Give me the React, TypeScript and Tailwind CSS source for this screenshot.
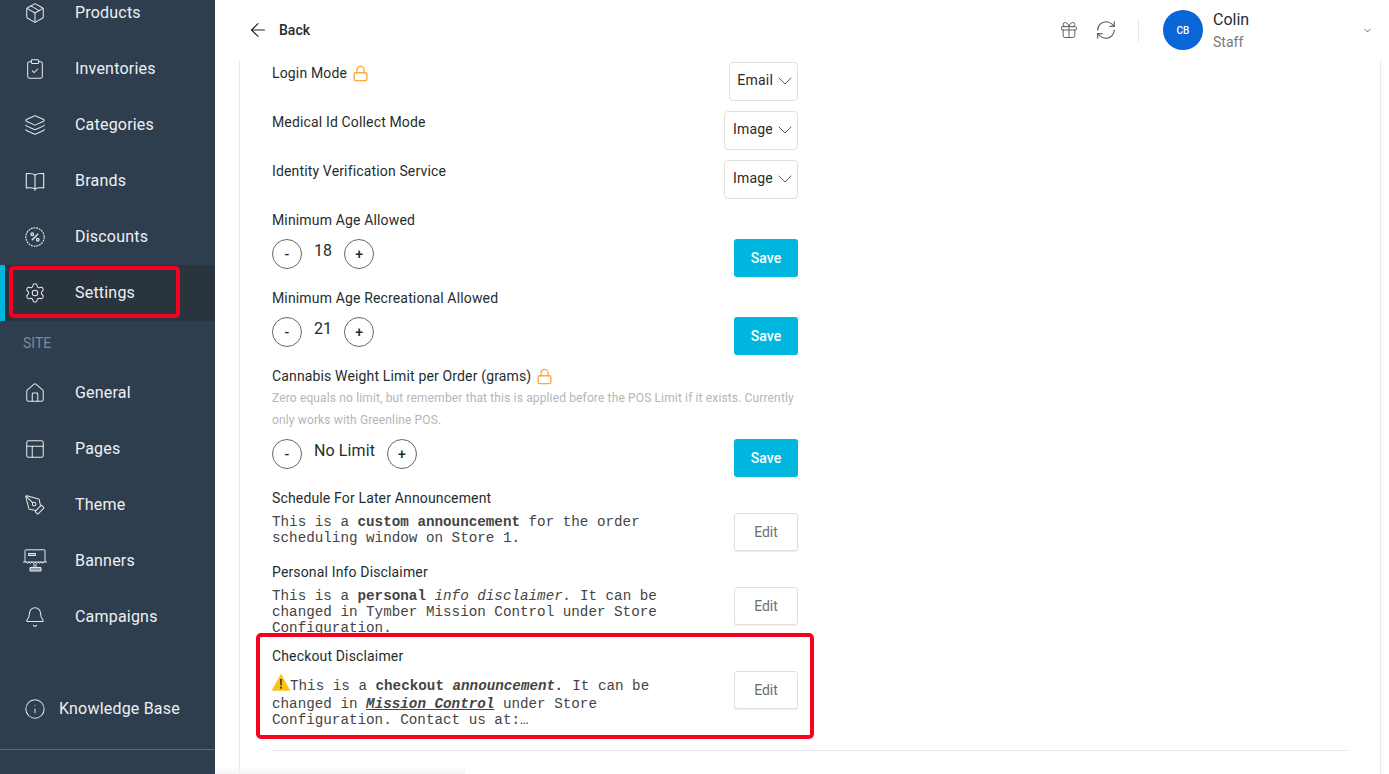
import {
  ArrowLeft,
  Bell,
  ChevronDown,
  ClipboardCheck,
  Gift,
  House,
  Info,
  Layers,
  Lock,
  Package,
  PanelsTopLeft,
  PenTool,
  RefreshCw,
  Settings,
} from 'lucide-react'
import type { ReactNode } from 'react'

const iconProps = { size: 22, strokeWidth: 1.1 }

function DiscountIcon() {
  return (
    <svg width="22" height="22" viewBox="0 0 24 24" fill="none" stroke="currentColor" strokeWidth="1.2">
      <circle cx="12" cy="12" r="10" strokeDasharray="2.2 0.8" />
      <path d="M8.5 15.5l7-7" strokeWidth="1.5" />
      <circle cx="9" cy="9" r="1.4" strokeWidth="1.4" />
      <circle cx="15" cy="15" r="1.4" strokeWidth="1.4" />
    </svg>
  )
}

function BookIcon() {
  return (
    <svg width="22" height="22" viewBox="0 0 24 24" fill="none" stroke="currentColor" strokeWidth="1.2">
      <path d="M12 5.5C10 4 6 3.5 2.5 4v15.5c3.5-.4 7.5 0 9.5 1 2-1 6-1.4 9.500-1V4C18 3.500 14 4 12 5.500z" />
      <path d="M12 5.500V22.500" />
    </svg>
  )
}

function BannerIcon() {
  return (
    <svg width="24" height="24" viewBox="0 0 24 24" fill="none" stroke="currentColor" strokeWidth="1" className="-ml-[1px]">
      <path d="M2 13V1.500Q2 .8 2.800 .8h18.400q.8 0 .8 .7V13" />
      <path d="M0 13h24" />
      <path d="M3 13l1.500 1.500L6 13l1.500 1.500L9 13l1.500 1.500L12 13l1.500 1.500L15 13l1.500 1.500L18 13l1.500 1.500L21 13" strokeWidth="0.8" />
      <path d="M5.500 4.500h7v2h-7z" fill="currentColor" fillOpacity="0.35" />
      <path d="M11 14.500v3.500M13 14.500v3.500" />
      <path d="M7 18.500h11v3.500H7z" fill="currentColor" fillOpacity="0.55" />
    </svg>
  )
}

function WarningIcon() {
  return (
    <svg width="18" height="17" viewBox="0 0 18 17" className="inline-block align-[-1px]">
      <path d="M9 0.5L17.600 16.200H0.400z" fill="#fcc21b" stroke="#fcc21b" strokeLinejoin="round" />
      <path d="M8.100 5h1.800l-.3 6.800H8.400z" fill="#2f2f2f" />
      <circle cx="9" cy="13.800" r="1.050" fill="#2f2f2f" />
    </svg>
  )
}

const catalogItems: [string, ReactNode][] = [
  ['Products', <Package {...iconProps} />],
  ['Inventories', <ClipboardCheck {...iconProps} />],
  ['Categories', <Layers {...iconProps} />],
  ['Brands', <BookIcon />],
  ['Discounts', <DiscountIcon />],
]

const siteItems: [string, ReactNode][] = [
  ['General', <House {...iconProps} />],
  ['Pages', <PanelsTopLeft {...iconProps} />],
  ['Theme', <PenTool {...iconProps} />],
  ['Banners', <BannerIcon />],
  ['Campaigns', <Bell {...iconProps} />],
]

function NavItem(props: { label: string; icon: ReactNode; active?: boolean }) {
  return (
    <div
      className={
        'flex h-14 items-center border-l-[5px] pl-[19px] ' +
        (props.active ? 'border-[#00b6de] bg-[#29343e]' : 'border-transparent')
      }
    >
      <span className="flex w-[51px] shrink-0 text-[#e6e9ec]">{props.icon}</span>
      <span className="text-base tracking-[0.2px] text-[#eef0f2]">{props.label}</span>
    </div>
  )
}

function Sidebar() {
  return (
    <aside className="flex h-full w-[215px] shrink-0 flex-col bg-[#2f3e4e]">
      <div className="-mt-[15px]">
        {catalogItems.map(([label, icon]) => (
          <NavItem key={label} label={label} icon={icon} />
        ))}
        <NavItem label="Settings" icon={<Settings {...iconProps} />} active />
      </div>
      <div className="flex h-11 items-center pl-[23px] text-sm text-[#7f8a94]">SITE</div>
      {siteItems.map(([label, icon]) => (
        <NavItem key={label} label={label} icon={icon} />
      ))}
      <div className="mt-[36px] flex h-14 items-center pl-6 text-[#e6e9ec]">
        <Info {...iconProps} />
        <span className="ml-[13px] text-base tracking-[0.2px] text-[#eef0f2]">Knowledge Base</span>
      </div>
      <div className="mt-[12px] border-t border-[#5d6a77]" />
    </aside>
  )
}

function Header() {
  return (
    <header className="flex h-[60px] shrink-0 items-center pl-[32px] pr-[16px]">
      <ArrowLeft size={22} strokeWidth={1.3} className="text-[#1f2d2d]" />
      <span className="ml-[10px] text-sm font-medium text-[#1f2d2d]">Back</span>
      <div className="ml-auto flex items-center">
        <Gift size={20} strokeWidth={1.1} className="text-[#555]" />
        <RefreshCw size={22} strokeWidth={1.1} className="ml-[16px] text-[#3c4a4a]" />
        <div className="ml-[21px] mr-6 h-6 border-l border-[#e4e7ee]" />
        <div className="flex h-10 w-10 items-center justify-center rounded-full bg-[#0a66d6] text-[10px] font-medium text-white">
          CB
        </div>
        <div className="ml-[10px] w-[149px]">
          <div className="pt-px text-base leading-5 text-[#1f2d2d]">Colin</div>
          <div className="mt-[2px] text-sm leading-5 text-[#77797c]">Staff</div>
        </div>
        <ChevronDown size={11} strokeWidth={1.5} className="text-[#333]" />
      </div>
    </header>
  )
}

function Label(props: { children: ReactNode; locked?: boolean }) {
  return (
    <div className="flex h-5 items-center text-sm tracking-[0.15px] text-[#1f2d2d]">
      {props.children}
      {props.locked && <Lock size={17} strokeWidth={1.9} className="ml-[5px] text-[#ffa73c]" />}
    </div>
  )
}

function SelectRow(props: { label: string; value: string; locked?: boolean }) {
  return (
    <div className="mb-[10px] flex items-start justify-between">
      <div className="pt-px">
        <Label locked={props.locked}>{props.label}</Label>
      </div>
      <div
        className={
          'flex h-[39px] items-center rounded border border-[#e2e0da] pb-[3px] text-sm tracking-[0.2px] text-[#1f2d2d] ' +
          (props.value === 'Email' ? 'pl-[7px]' : 'pl-2')
        }
      >
        {props.value}
        <ChevronDown size={24} strokeWidth={0.8} className="mt-[1px] text-[#333]" />
      </div>
    </div>
  )
}

function RoundButton(props: { children: string }) {
  return (
    <span className="flex h-[30px] w-[30px] items-center justify-center rounded-full border border-[#666] text-sm font-medium text-[#1f2d2d]">
      {props.children}
    </span>
  )
}

function SaveButton() {
  return (
    <button className="flex h-[38px] w-16 items-center justify-center rounded-[3px] bg-[#00b8df] text-sm font-medium text-white">
      Save
    </button>
  )
}

function EditButton() {
  return (
    <button className="flex h-[38px] w-16 shrink-0 items-center justify-center rounded-[3px] border border-[#e2e0da] bg-white text-sm text-[#6b6f72] shadow-[0_1px_1px_rgba(0,0,0,0.08)]">
      Edit
    </button>
  )
}

function StepperRow(props: { label: string; value: string; locked?: boolean; hint?: ReactNode }) {
  return (
    <div className="mb-[10px]">
      <div className="pt-px">
        <Label locked={props.locked}>{props.label}</Label>
      </div>
      {props.hint}
      <div className={'flex items-start justify-between ' + (props.hint ? 'mt-2' : 'mt-[9px]')}>
        <div className="flex items-start">
          <RoundButton>-</RoundButton>
          <span className="mx-3 text-base tracking-[0.1px] text-[#1f2d2d]">{props.value}</span>
          <RoundButton>+</RoundButton>
        </div>
        <SaveButton />
      </div>
    </div>
  )
}

function Mono(props: { children: ReactNode }) {
  return (
    <div className="w-[400px] pt-px font-['Liberation_Mono',monospace] text-[14.25px] leading-4 text-[#444]">
      {props.children}
    </div>
  )
}

export default function App() {
  return (
    <div className="relative flex h-[774px] w-[1389px] overflow-hidden bg-white font-['Roboto',sans-serif]">
      <Sidebar />
      <main className="flex min-w-0 flex-1 flex-col">
        <Header />
        <section className="ml-6 mr-2 flex-1 border-x border-[#e8e9f0] px-8 pt-[2px]">
          <div className="w-[526px]">
            <SelectRow label="Login Mode" value="Email" locked />
            <SelectRow label="Medical Id Collect Mode" value="Image" />
            <SelectRow label="Identity Verification Service" value="Image" />
            <StepperRow label="Minimum Age Allowed" value="18" />
            <StepperRow label="Minimum Age Recreational Allowed" value="21" />
            <StepperRow
              label="Cannabis Weight Limit per Order (grams)"
              value="No Limit"
              locked
              hint={
                <p className="mt-px text-xs leading-[22px] tracking-[0.14px] text-[#b5b5b8]">
                  Zero equals no limit, but remember that this is applied before the POS Limit if it exists. Currently only works with Greenline POS.
                </p>
              }
            />
            <div className="mb-[10px]">
              <div className="pt-px">
                <Label>Schedule For Later Announcement</Label>
              </div>
              <div className="mt-[5px] flex items-start justify-between">
                <Mono>
                  This is a <b>custom announcement</b> for the order scheduling window on Store 1.
                </Mono>
                <EditButton />
              </div>
            </div>
            <div className="mb-[10px]">
              <div className="pt-px">
                <Label>Personal Info Disclaimer</Label>
              </div>
              <div className="mt-[5px] flex items-start justify-between">
                <Mono>
                  This is a <b>personal</b> <i>info disclaimer.</i> It can be changed in Tymber Mission Control under Store Configuration.
                </Mono>
                <EditButton />
              </div>
            </div>
            <div>
              <Label>Checkout Disclaimer</Label>
              <div className="mt-[5px] flex items-start justify-between">
                <Mono>
                  <div className="flex h-6 items-end pb-[2px]">
                    <span className="whitespace-pre">
                      <WarningIcon />This is a <b>checkout</b> <b><i>announcement.</i></b> It can be
                    </span>
                  </div>
                  changed in <b><i><u>Mission Control</u></i></b> under Store Configuration. Contact us at:…
                </Mono>
                <EditButton />
              </div>
            </div>
          </div>
          <div className="mt-[22px] border-t border-[#e8e9f0]" />
        </section>
      </main>
      <div className="absolute left-[9px] top-[266px] h-[52px] w-[171px] rounded-[5px] border-4 border-[#f80020]" />
      <div className="absolute left-[256px] top-[633px] h-[106px] w-[558px] rounded-[5px] border-4 border-[#f80020]" />
      <div className="absolute bottom-0 left-[215px] h-[7px] w-[250px] bg-gradient-to-b from-transparent to-[#f4f4f6]" />
    </div>
  )
}
